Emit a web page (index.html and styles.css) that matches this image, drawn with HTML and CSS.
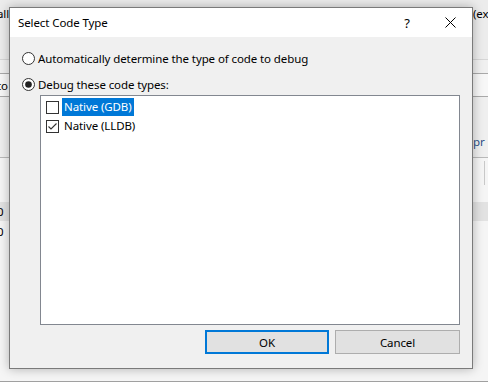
FILE: index.html
```html
<!DOCTYPE html>
<html>
<head>
<meta charset="utf-8">
<link rel="stylesheet" href="styles.css">
</head>
<body>
<div class="app">
  <div class="bg-row r-top"><span class="bl">all</span><span class="br">(ex</span></div>
  <div class="bg-row r-a"></div>
  <div class="bg-row r-b"><span class="bl">to</span><span class="br"></span></div>
  <div class="bg-row r-c"><span class="bl"></span><span class="br pr">pr</span></div>
  <div class="bg-row r-d"><span class="bl"></span><span class="br"><i class="vline"></i></span></div>
  <div class="bg-row r-e"><span class="bl num">0</span><span class="br"></span></div>
  <div class="bg-row r-f"><span class="bl num">0</span><span class="br"></span></div>
  <div class="bg-row r-g"></div>
  <div class="bg-row r-h"></div>

  <div class="dialog">
    <div class="titlebar">
      <span class="title">Select Code Type</span>
      <span class="help">?</span>
      <span class="close">
        <svg width="11" height="11" viewBox="0 0 11 11"><path d="M0.5 0.5 L10.5 10.5 M10.5 0.5 L0.5 10.5" stroke="#000" stroke-width="1" fill="none"/></svg>
      </span>
    </div>
    <div class="body">
      <div class="radio-row">
        <svg class="radio" width="13" height="13" viewBox="0 0 13 13"><circle cx="6.5" cy="6.5" r="6" fill="#fff" stroke="#333" stroke-width="1"/></svg>
        <span>Automatically determine the type of code to debug</span>
      </div>
      <div class="radio-row second">
        <svg class="radio" width="13" height="13" viewBox="0 0 13 13"><circle cx="6.5" cy="6.5" r="6" fill="#fff" stroke="#333" stroke-width="1"/><circle cx="6.5" cy="6.5" r="3.3" fill="#222"/></svg>
        <span>Debug these code types:</span>
      </div>
      <div class="listbox">
        <div class="item">
          <svg class="check" width="13" height="13" viewBox="0 0 13 13"><rect x="0.5" y="0.5" width="12" height="12" fill="#fff" stroke="#333"/></svg>
          <span class="label selected">Native (GDB)</span>
        </div>
        <div class="item">
          <svg class="check" width="13" height="13" viewBox="0 0 13 13"><rect x="0.5" y="0.5" width="12" height="12" fill="#fff" stroke="#333"/><path d="M2.5 6.5 L5 9 L10.5 3.5" stroke="#333" stroke-width="1.1" fill="none"/></svg>
          <span class="label">Native (LLDB)</span>
        </div>
      </div>
      <div class="buttons">
        <button class="btn default">OK</button>
        <button class="btn cancel">Cancel</button>
      </div>
    </div>
  </div>
</div>
</body>
</html>
```

FILE: styles.css
```css
html, body {
  margin: 0;
  padding: 0;
}
body {
  width: 488px;
  height: 383px;
  overflow: hidden;
  background: #ffffff;
  font-family: "Segoe UI", "Noto Sans", "Open Sans", sans-serif;
  font-size: 11.5px;
  letter-spacing: -0.1px;
  color: #000;
}
.app {
  position: relative;
  width: 488px;
  height: 383px;
  display: flex;
  flex-direction: column;
  background: #f3f3f3;
}
.bg-row {
  display: flex;
  justify-content: space-between;
  align-items: center;
  box-sizing: border-box;
}
.bl { margin-left: -3px; }
.br { margin-right: 0; width: 15px; }
.r-top { height: 60px; background: #ececec; border-bottom: 1px solid #d6d6d6; align-items: flex-start; padding-top: 6px; }
.r-a { height: 14px; background: #f0f0f0; border-bottom: 1px solid #a9a9a9; }
.r-b { height: 23px; background: #f7f7f7; border-bottom: 1px solid #a9a9a9; }
.r-c { height: 61px; background: #efefef; border-bottom: 1px solid #b9b9b9; align-items: flex-end; padding-bottom: 8px; }
.pr { color: #2b4f85; }
.r-d { height: 44px; background: #f5f5f5; align-items: flex-start; }
.vline { display: block; width: 1px; height: 24px; background: #c8c8c8; margin-left: 11px; margin-top: 3px; }
.r-e { height: 19px; background: #e2e2e2; }
.r-f { height: 20px; background: #f5f5f5; }
.r-g { height: 141px; background: #f5f5f5; border-bottom: 1px solid #a0a0a0; }
.r-h { flex: 1; background: #ffffff; }

.dialog {
  position: absolute;
  left: 9px;
  top: 7px;
  width: 462px;
  height: 360px;
  border: 1px solid #7a7a7a;
  background: #f0f0f0;
  box-shadow: 0 0 10px rgba(0, 0, 0, 0.28);
  display: flex;
  flex-direction: column;
}
.titlebar {
  height: 30px;
  background: #ffffff;
  display: flex;
  align-items: center;
  padding-left: 8px;
}
.title { flex: 1; }
.help {
  width: 42px;
  text-align: center;
  font-size: 13px;
}
.close {
  width: 44px;
  display: flex;
  justify-content: center;
  align-items: center;
}
.body {
  flex: 1;
  display: flex;
  flex-direction: column;
  padding: 13px 12px 14px 12px;
}
.radio-row {
  height: 16px;
  display: flex;
  align-items: center;
  gap: 3px;
}
.radio-row.second { margin-top: 10px; }
.radio { flex: none; }
.listbox {
  margin: 3px 0 0 18px;
  height: 227px;
  border: 1px solid #828790;
  background: #ffffff;
  padding: 1px 0 0 5px;
}
.item {
  height: 19px;
  display: flex;
  align-items: center;
}
.check { flex: none; margin-right: 3px; margin-top: 2px; }
.label {
  padding: 0 2px;
  line-height: 18px;
}
.label.selected {
  background: #0078d7;
  color: #ffffff;
}
.buttons {
  margin-top: 5px;
  display: flex;
  justify-content: flex-end;
  gap: 6px;
}
.btn {
  font-family: inherit;
  font-size: 11.5px;
  letter-spacing: -0.1px;
  color: #000;
  background: #e1e1e1;
  height: 24px;
  box-sizing: border-box;
  padding: 0;
  margin: 0;
}
.btn.default { width: 124px; border: 2px solid #0078d7; }
.btn.cancel { width: 125px; border: 1px solid #adadad; }
```
